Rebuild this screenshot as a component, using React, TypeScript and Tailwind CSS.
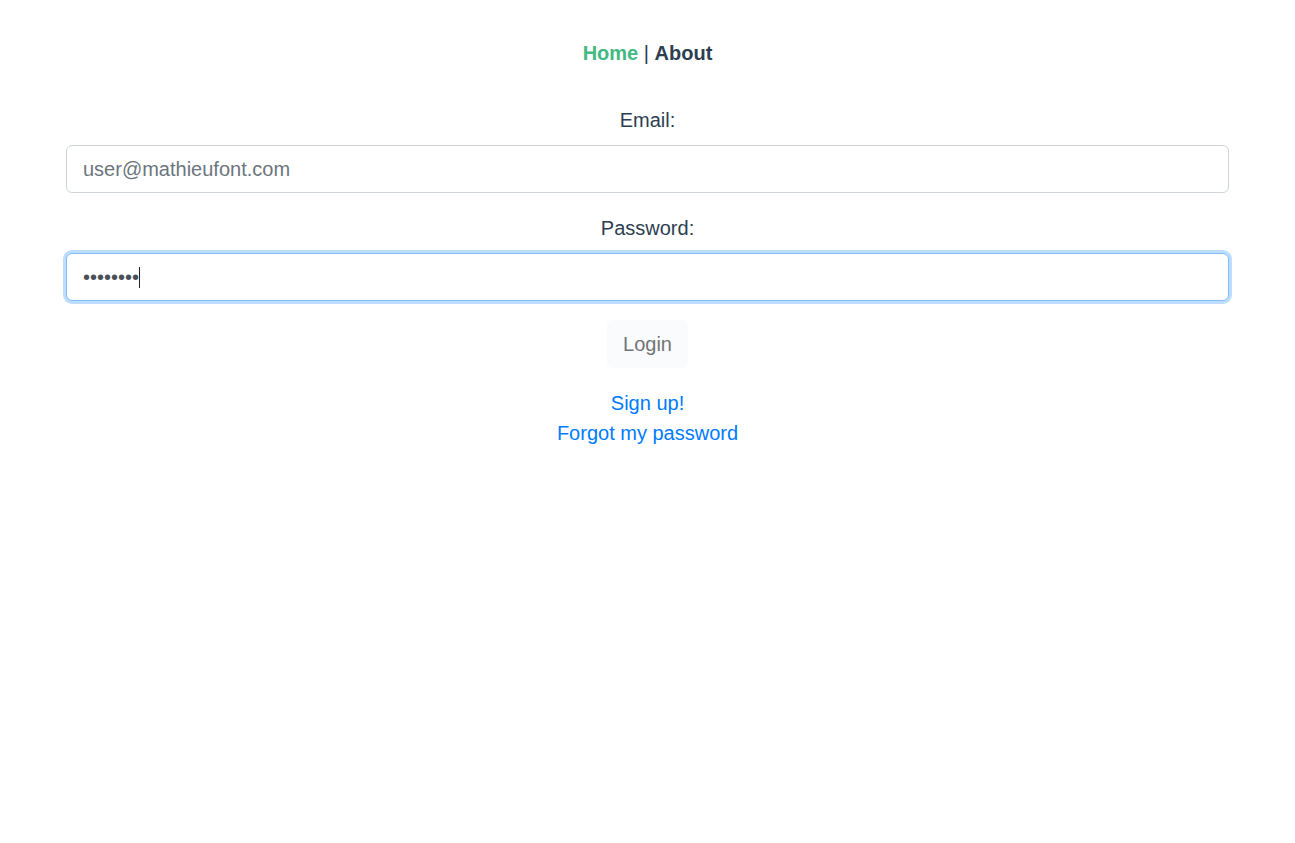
export default function App() {
  return (
    <div
      className="min-h-screen bg-white text-[20px] leading-[30px] text-[#2c3e50] text-center"
      style={{ fontFamily: '"Liberation Sans", Arial, Helvetica, sans-serif' }}
    >
      {/* Nav */}
      <nav className="pt-[38px] pb-[37px]">
        <a className="font-bold text-[#42b983]">Home</a>
        <span> | </span>
        <a className="font-bold text-[#2c3e50]">About</a>
      </nav>

      <form className="px-[66px]" onSubmit={(e) => e.preventDefault()}>
        <div className="mb-[20px]">
          <label className="block mb-[10px]">Email:</label>
          <input
            type="email"
            placeholder="user@mathieufont.com"
            className="block w-full h-[48px] px-[16px] rounded-[6px] border border-[#ced4da] bg-white text-[20px] text-[#495057] placeholder:text-[#6c757d] outline-none"
          />
        </div>

        <div className="mb-[19px]">
          <label className="block mb-[10px]">Password:</label>
          <div className="flex items-center w-full h-[48px] px-[16px] rounded-[6px] border border-[#80bdff] bg-white text-left text-[20px] text-[#495057] shadow-[0_0_0_3px_rgba(0,123,255,0.25)]">
            <span>••••••••</span>
            <span className="inline-block w-px h-[21px] bg-[#222]" />
          </div>
        </div>

        <button
          type="submit"
          disabled
          className="h-[48px] px-[16px] rounded-[6px] bg-[#fafbfc] text-[20px] text-[#727578]"
        >
          Login
        </button>

        <div className="mt-[20px] flex flex-col items-center">
          <a className="text-[#007bff]">Sign up!</a>
          <a className="text-[#007bff]">Forgot my password</a>
        </div>
      </form>
    </div>
  );
}
